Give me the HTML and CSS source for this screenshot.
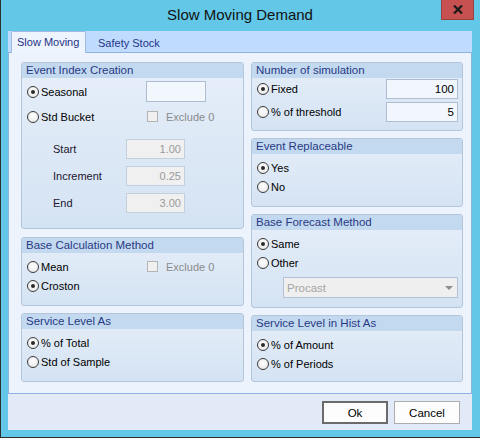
FILE: index.html
```html
<!DOCTYPE html>
<html lang="en">
<head>
    <meta charset="UTF-8">
    <title>Slow Moving Demand</title>
    <link rel="stylesheet" href="styles.css">
</head>
<body>

    <div class="window">
        <div class="titlebar">
            <span class="title">Slow Moving Demand</span>
            <span class="close">
                <svg width="10" height="9" viewBox="0 0 10 9">
                    <path d="M1 0.5 L9 8.5 M9 0.5 L1 8.5" stroke="#1b1b1b" stroke-width="2.2" fill="none"/>
                </svg>
            </span>
        </div>

        <div class="client">
            <div class="tabs">
                <div class="tab active">Slow Moving</div>
                <div class="tab">Safety Stock</div>
            </div>

            <div class="page">
                <!-- columna izquierda -->
                <div class="col col-left">
                    <div class="group g-index">
                        <div class="group-head">Event Index Creation</div>
                        <div class="group-body">
                            <div class="row row-top">
                                <label class="opt"><span class="radio checked"></span>Seasonal</label>
                                <span class="textbox seasonal"></span>
                            </div>
                            <div class="row row-bucket">
                                <label class="opt"><span class="radio"></span>Std Bucket</label>
                                <label class="check"><span class="checkbox"></span>Exclude 0</label>
                            </div>
                            <div class="field first">
                                <span class="field-label">Start</span>
                                <span class="textbox disabled">1.00</span>
                            </div>
                            <div class="field">
                                <span class="field-label">Increment</span>
                                <span class="textbox disabled">0.25</span>
                            </div>
                            <div class="field">
                                <span class="field-label">End</span>
                                <span class="textbox disabled">3.00</span>
                            </div>
                        </div>
                    </div>

                    <div class="group g-calc">
                        <div class="group-head">Base Calculation Method</div>
                        <div class="group-body list">
                            <div class="row radio-row">
                                <label class="opt"><span class="radio"></span>Mean</label>
                                <label class="check"><span class="checkbox"></span>Exclude 0</label>
                            </div>
                            <div class="row radio-row">
                                <label class="opt"><span class="radio checked"></span>Croston</label>
                            </div>
                        </div>
                    </div>

                    <div class="group g-service">
                        <div class="group-head">Service Level As</div>
                        <div class="group-body list">
                            <label class="opt radio-row"><span class="radio checked"></span>% of Total</label>
                            <label class="opt radio-row"><span class="radio"></span>Std of Sample</label>
                        </div>
                    </div>
                </div>

                <!-- columna derecha -->
                <div class="col col-right">
                    <div class="group g-sim">
                        <div class="group-head">Number of simulation</div>
                        <div class="group-body sim">
                            <div class="sim-row">
                                <label class="opt"><span class="radio checked"></span>Fixed</label>
                                <span class="textbox num">100</span>
                            </div>
                            <div class="sim-row">
                                <label class="opt"><span class="radio"></span>% of threshold</label>
                                <span class="textbox num">5</span>
                            </div>
                        </div>
                    </div>

                    <div class="group g-replace">
                        <div class="group-head">Event Replaceable</div>
                        <div class="group-body list">
                            <label class="opt radio-row"><span class="radio checked"></span>Yes</label>
                            <label class="opt radio-row"><span class="radio"></span>No</label>
                        </div>
                    </div>

                    <div class="group g-forecast">
                        <div class="group-head">Base Forecast Method</div>
                        <div class="group-body list">
                            <label class="opt radio-row"><span class="radio checked"></span>Same</label>
                            <label class="opt radio-row"><span class="radio"></span>Other</label>
                            <div class="combo">
                                <span>Procast</span>
                                <span class="arrow"></span>
                            </div>
                        </div>
                    </div>

                    <div class="group g-hist">
                        <div class="group-head">Service Level in Hist As</div>
                        <div class="group-body list">
                            <label class="opt radio-row"><span class="radio checked"></span>% of Amount</label>
                            <label class="opt radio-row"><span class="radio"></span>% of Periods</label>
                        </div>
                    </div>
                </div>
            </div>

            <div class="footer">
                <button class="button default">Ok</button>
                <button class="button">Cancel</button>
            </div>
        </div>
    </div>

</body>
</html>
```

FILE: styles.css
```css
body {
    margin: 0;
    padding: 0;
    font-family: "Liberation Sans", Arial, sans-serif;
    font-size: 11px;
    color: #000;
}

.window {
    width: 480px;
    height: 438px;
    box-sizing: border-box;
    background-color: #63c8e8;
    border-left: 1px solid #2e2e2e;
    border-bottom: 1px solid #2e2e2e;
    padding: 0 8px 0 7px;
}

/* Barra de titulo */
.titlebar {
    height: 31px;
    position: relative;
    text-align: center;
}

.title {
    font-size: 15px;
    line-height: 30px;
    color: #111;
}

.close {
    position: absolute;
    top: 0;
    right: -2px;
    width: 33px;
    height: 20px;
    box-sizing: border-box;
    background-color: #c75050;
    border: 1px solid #9e3f3f;
    border-top: none;
    display: flex;
    justify-content: center;
    align-items: center;
}

/* Area cliente */
.client {
    height: 399px;
    background-color: #e3eaf7;
    display: flex;
    flex-direction: column;
}

.tabs {
    height: 21px;
    background-color: #bfdbfe;
    display: flex;
    align-items: flex-end;
    padding-left: 3px;
    position: relative;
    z-index: 1;
}

.tab {
    height: 20px;
    line-height: 20px;
    padding: 0 6px;
    color: #24358a;
    margin-bottom: -1px;
}

.tab.active {
    width: 75px;
    box-sizing: border-box;
    padding: 0 5px;
    background-color: #eef4fd;
    border: 1px solid #9ebbe2;
    border-bottom: none;
    border-radius: 2px 2px 0 0;
    height: 22px;
    line-height: 21px;
    color: #1f3386;
}

.tab + .tab {
    margin-left: 6px;
}

.page {
    height: 342px;
    box-sizing: border-box;
    border: 1px solid #8db1e0;
    background-color: #edf3fc;
    padding: 9px 8px 0 12px;
    display: flex;
    gap: 7px;
}

.col {
    display: flex;
    flex-direction: column;
}

.col-left {
    width: 223px;
}

.col-right {
    width: 212px;
}

/* Grupos */
.group {
    box-sizing: border-box;
    border: 1px solid #b3c6dc;
    border-radius: 3px;
    background: linear-gradient(#e6eef9, #d4e3f3);
    overflow: hidden;
}

.group-head {
    height: 15px;
    line-height: 15px;
    padding-left: 4px;
    background-color: #c3d9f0;
    color: #283a84;
    font-size: 11.5px;
}

.group-body {
    padding: 0 4px 0 5px;
}

.g-index { height: 167px; }
.g-calc { height: 69px; margin-top: 8px; }
.g-service { height: 69px; margin-top: 7px; }

.g-sim { height: 69px; }
.g-replace { height: 69px; margin-top: 7px; }
.g-forecast { height: 94px; margin-top: 7px; }
.g-hist { height: 67px; margin-top: 7px; }

.row {
    display: grid;
    grid-template-columns: 119px 1fr;
    align-items: center;
}

.row-top {
    height: 21px;
    margin-top: 3px;
}

.row-bucket {
    height: 21px;
    margin-top: 4px;
}

.list {
    padding-top: 4px;
}

.radio-row {
    height: 19px;
}

.opt {
    display: flex;
    align-items: center;
    white-space: nowrap;
}

.radio {
    width: 12px;
    height: 12px;
    box-sizing: border-box;
    border: 1px solid #3a3a3a;
    border-radius: 50%;
    background: radial-gradient(circle at 50% 40%, #ffffff, #e4e4e4);
    margin-right: 2px;
    position: relative;
    flex-shrink: 0;
}

.radio.checked::after {
    content: "";
    position: absolute;
    left: 3px;
    top: 3px;
    width: 4px;
    height: 4px;
    border-radius: 50%;
    background-color: #2a2a2a;
}

.check {
    display: flex;
    align-items: center;
    color: #8a8a8a;
    padding-left: 1px;
}

.checkbox {
    width: 11px;
    height: 11px;
    box-sizing: border-box;
    border: 1px solid #b4b4b4;
    background-color: #f0f0f0;
    margin-right: 8px;
}

/* Cajas de texto */
.textbox {
    display: block;
    height: 20px;
    line-height: 18px;
    box-sizing: border-box;
    border: 1px solid #aebdd2;
    background-color: #f2f7fd;
    text-align: right;
    padding-right: 3px;
}

.seasonal {
    width: 60px;
    height: 21px;
}

.textbox.disabled {
    width: 59px;
    background-color: #f0f0f0;
    border-color: #c3cfdc;
    color: #9a9a9a;
}

.field {
    display: flex;
    align-items: center;
    height: 20px;
    margin-top: 7px;
    padding-left: 26px;
}

.field.first {
    margin-top: 12px;
}

.field-label {
    width: 73px;
    color: #1c1530;
}

.sim {
    padding-top: 0;
}

.sim-row {
    height: 21px;
    display: flex;
    align-items: center;
    justify-content: space-between;
}

.sim-row + .sim-row {
    margin-top: 2px;
}

.textbox.num {
    width: 72px;
    font-size: 11.5px;
}

.combo {
    margin: 5px 0 0 26px;
    height: 21px;
    box-sizing: border-box;
    border: 1px solid #b2c3d8;
    background-color: #efefef;
    color: #a6a6a6;
    font-size: 11.5px;
    display: flex;
    align-items: center;
    justify-content: space-between;
    padding: 0 4px 0 3px;
}

.arrow {
    width: 0;
    height: 0;
    border-left: 4px solid transparent;
    border-right: 4px solid transparent;
    border-top: 4px solid #8c8c8c;
}

/* Botones */
.footer {
    flex: 1;
    display: flex;
    justify-content: flex-end;
    gap: 6px;
    padding: 7px 12px 0 0;
}

.button {
    width: 66px;
    height: 23px;
    box-sizing: border-box;
    background-color: #fdfdfd;
    border: 1px solid #adadad;
    font-family: "Liberation Sans", Arial, sans-serif;
    font-size: 11.5px;
    color: #000;
    padding: 0;
}

.button.default {
    border: 2px solid #6b6b6b;
}
```
